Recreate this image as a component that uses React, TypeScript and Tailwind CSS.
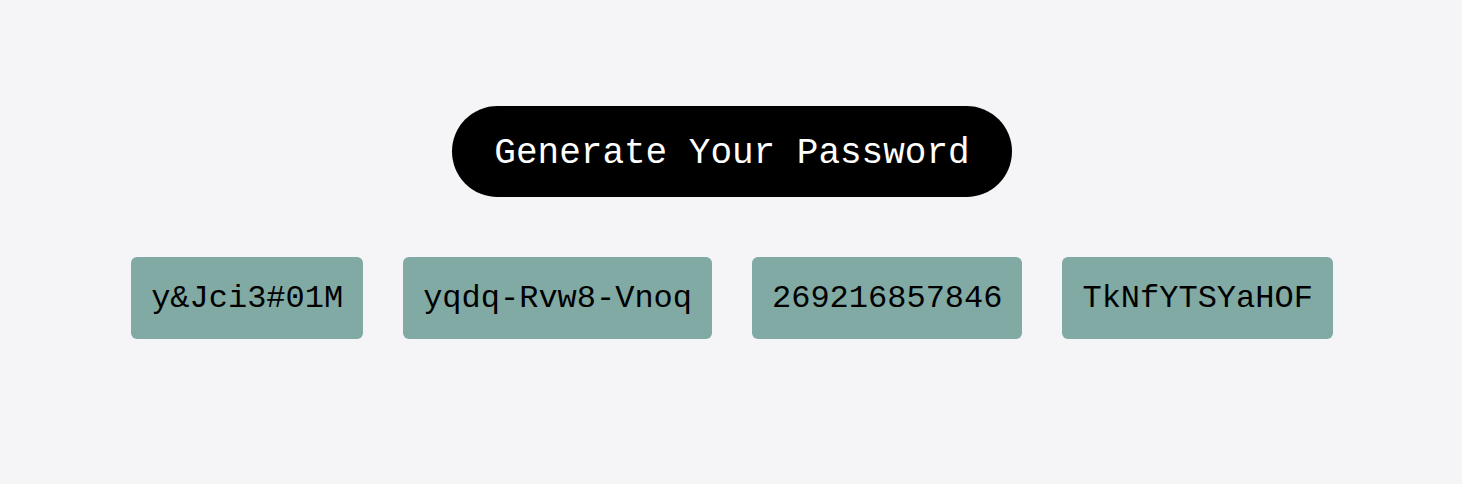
export default function App() {
  const passwords = ["y&Jci3#01M", "yqdq-Rvw8-Vnoq", "269216857846", "TkNfYTSYaHOF"];

  return (
    <div className="min-h-screen bg-[#f5f5f7] pt-[106px] font-['Liberation_Mono',monospace]">
      <div className="flex flex-col items-center gap-[60px] pl-[2px]">
        <button className="h-[91px] px-[42px] pt-[4px] rounded-full bg-black text-white text-[36px] leading-none">
          Generate Your Password
        </button>
        <div className="flex gap-10">
          {passwords.map((p) => (
            <div
              key={p}
              className="h-[82px] px-5 pt-[2px] flex items-center rounded-md bg-[#80aaa3] text-black text-[32px] leading-none"
            >
              {p}
            </div>
          ))}
        </div>
      </div>
    </div>
  );
}
